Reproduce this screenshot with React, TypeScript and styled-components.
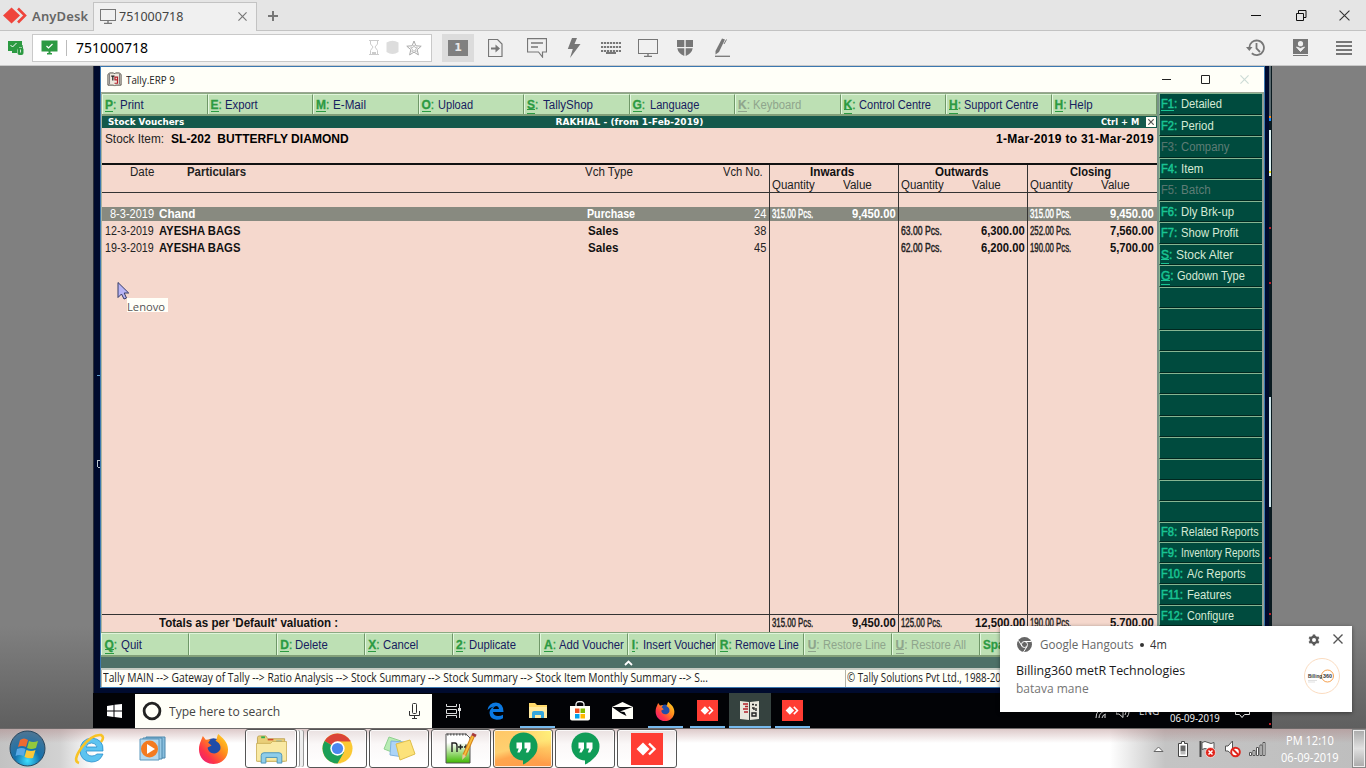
import React, { useLayoutEffect, useRef, useState } from "react";
import styled, { createGlobalStyle, css } from "styled-components";

const Global = createGlobalStyle`
  * { box-sizing: border-box; }
  html, body { margin: 0; padding: 0; overflow: hidden; }
  svg { display: block; flex: none; }
`;

const arial = `"Liberation Sans", Arial, sans-serif`;
const segoe = `"Open Sans", "Noto Sans", sans-serif`;
const tahoma = `"Noto Sans", "DejaVu Sans", sans-serif`;
const verdana = `"DejaVu Sans", Verdana, sans-serif`;

/* ---------- text that is tracked out or condensed to a given width ---------- */
const FitSpan = styled.span`
  display: inline-block;
  white-space: pre;
  transform-origin: 0 50%;
  flex: none;
`;

function Fit({ w, children }: { w: number; children: string }) {
  const ref = useRef<HTMLSpanElement>(null);
  const [style, setStyle] = useState<React.CSSProperties>({});
  useLayoutEffect(() => {
    const natural = ref.current!.offsetWidth;
    setStyle(
      natural > w
        ? { transform: `scaleX(${w / natural})`, marginRight: w - natural }
        : { letterSpacing: `${(w - natural) / children.length}px` }
    );
  }, [w, children]);
  return (
    <FitSpan ref={ref} style={style}>
      {children}
    </FitSpan>
  );
}

/* ---------- page ---------- */
const Page = styled.div`
  position: relative;
  width: 1366px;
  height: 768px;
  display: flex;
  flex-direction: column;
  overflow: hidden;
  background: #808080;
  font-family: ${arial};
`;

const TabBar = styled.div`
  height: 31px;
  flex: none;
  display: flex;
  align-items: stretch;
  background: #e5e5e5;
  border-bottom: 1px solid #c3c3c3;
  font-family: ${tahoma};
`;
const Brand = styled.div`
  width: 93px;
  padding: 1px 0 0 3px;
  display: flex;
  align-items: center;
  gap: 5px;
  font-size: 13px;
  font-weight: 600;
  color: #666;
`;
const Tab = styled.div`
  width: 164px;
  height: 30px;
  margin: 2px 0 -1px;
  padding: 0 9px 2px 6px;
  display: flex;
  align-items: center;
  gap: 3px;
  font-size: 12.5px;
  color: #444;
  background: #f0f0f0;
  border: 1px solid #c3c3c3;
  border-bottom: 0;
`;
const Push = styled.div`
  flex: 1;
`;
const PlusBox = styled.div`
  width: 32px;
  display: flex;
  align-items: center;
  justify-content: center;
  padding-top: 2px;
`;
const WinControls = styled.div`
  display: flex;
  align-items: center;
  gap: 34px;
  padding-right: 16px;
  svg:nth-child(-n + 2) {
    position: relative;
    left: 2px;
  }
`;

const ToolBar = styled.div`
  height: 35px;
  flex: none;
  display: flex;
  align-items: center;
  padding: 0 14px 1px 8px;
  background: #f0f0f0;
  border-bottom: 1px solid #c9c9c9;
`;
const Address = styled.div`
  width: 400px;
  height: 28px;
  margin-left: 6px;
  padding: 0 9px 0 8px;
  display: flex;
  align-items: center;
  background: #fff;
  border: 1px solid #c9c9c9;
  font-family: ${tahoma};
  font-size: 14px;
  color: #000;
`;
const Divider = styled.div`
  width: 1px;
  height: 16px;
  margin: 0 9px 0 8px;
  background: #bbb;
`;
const AddressIcons = styled.div`
  display: flex;
  align-items: center;
  gap: 7px;
`;
const ScreenButton = styled.div`
  width: 32px;
  height: 28px;
  margin-left: 10px;
  display: flex;
  align-items: center;
  justify-content: center;
  background: #dcdcdc;
`;
const ScreenNo = styled.div`
  width: 20px;
  height: 16px;
  background: #808080;
  color: #e8e8e8;
  font: bold 11px/16px ${verdana};
  text-align: center;
`;
const Tools = styled.div`
  display: flex;
  align-items: center;
  margin-left: 9px;
`;
const ToolSlot = styled.div<{ $w: number }>`
  width: ${(p) => p.$w}px;
  display: flex;
  justify-content: center;
`;
const RightTools = styled.div`
  display: flex;
  align-items: center;
  gap: 28px;
`;

/* ---------- remote desktop ---------- */
const Stage = styled.div`
  height: 662px;
  flex: none;
  display: flex;
  padding-left: 93px;
  background: linear-gradient(#808080 560px, #5f5f5f 662px);
`;
const Remote = styled.div`
  position: relative;
  width: 1179px;
  height: 662px;
  display: flex;
  flex-direction: column;
  background: linear-gradient(90deg, #2b2f38 0 1px, #000b2e 1px 1176px, #0a1a20 1176px);
`;
const Speck = styled.div<{ $x: number; $y: number; $w: number; $h: number; $c: string }>`
  position: absolute;
  left: ${(p) => p.$x}px;
  top: ${(p) => p.$y}px;
  width: ${(p) => p.$w}px;
  height: ${(p) => p.$h}px;
  background: ${(p) => p.$c};
`;
const TallyWindow = styled.div`
  width: 1165px;
  height: 622px;
  margin: 0 0 5px 7px;
  display: flex;
  flex-direction: column;
  border: 1px solid #3b78b0;
  background: #fffff8;
`;
const TitleBar = styled.div`
  height: 26px;
  flex: none;
  display: flex;
  align-items: center;
  gap: 4px;
  padding: 0 15px 1px 6px;
  font: 11px ${segoe};
  color: #222;
  border-bottom: 1px solid #9aa593;
`;
const TitleControls = styled.div`
  display: flex;
  align-items: center;
  gap: 30px;
`;
const Work = styled.div`
  height: 539px;
  flex: none;
  display: flex;
`;
const MainCol = styled.div`
  width: 1056px;
  display: flex;
  flex-direction: column;
  border-left: 1px solid #a9b3a0;
`;
const ButtonRow = styled.div<{ $h: number }>`
  height: ${(p) => p.$h}px;
  flex: none;
  display: flex;
  border-top: 1px solid #8ba982;
  border-bottom: 2px solid #82a079;
  background: #bde0b4;
`;
const GreenButton = styled.div<{ $w: number; $off?: boolean }>`
  width: ${(p) => p.$w}px;
  flex: none;
  display: flex;
  align-items: center;
  padding-left: 2px;
  overflow: hidden;
  white-space: nowrap;
  border-left: 1px solid #e4f8df;
  border-top: 1px solid #e0f4da;
  border-right: 1px solid #6f9768;
  background: #bde0b4;
  color: ${(p) => (p.$off ? "#8fa58c" : "#17205f")};
  font-size: 12px;
`;
const BottomRow = styled(ButtonRow)`
  ${GreenButton} {
    padding-left: 2.5px;
  }
`;
const Key = styled.span<{ $w: number; $off?: boolean; $dark?: boolean; $lines?: number }>`
  width: ${(p) => p.$w}px;
  flex: none;
  color: ${(p) => (p.$dark ? (p.$off ? "#54756e" : "#19c493") : p.$off ? "#8fa58c" : "#2c9a42")};
  -webkit-text-stroke: ${(p) => (p.$off ? 0.15 : p.$dark ? 0.5 : 0.3)}px currentColor;
  b {
    display: inline-block;
    position: relative;
    font-weight: ${(p) => (p.$dark ? 400 : 700)};
    font-size: 12px;
    line-height: 14px;
  }
  ${(p) =>
    p.$lines &&
    css`
      b::after {
        content: "";
        position: absolute;
        left: 0;
        right: 0;
        bottom: ${p.$lines === 2 ? -2 : -1}px;
        height: ${p.$lines === 2 ? 3 : 1}px;
        border-top: 1px solid currentColor;
        border-bottom: ${p.$lines === 2 ? "1px solid currentColor" : "0"};
      }
    `}
`;
const ReportBar = styled.div`
  height: 12px;
  flex: none;
  display: flex;
  align-items: center;
  justify-content: space-between;
  padding: 0 1px 0 6px;
  background: #14594b;
  color: #fff;
  font: bold 9px/11px ${verdana};
`;
const BarSide = styled.div<{ $w: number }>`
  width: ${(p) => p.$w}px;
  display: flex;
  align-items: center;
  justify-content: flex-end;
  gap: 7px;
  &:first-child {
    justify-content: flex-start;
  }
`;
const CloseMini = styled.div`
  width: 10px;
  height: 10px;
  background: #fffff8;
  padding: 2px;
`;
const ItemHeader = styled.div`
  height: 35px;
  flex: none;
  display: flex;
  justify-content: space-between;
  align-items: flex-start;
  padding: 3px 3px 0 3px;
  font-size: 12px;
  line-height: 16px;
  color: #222;
  background: #f5d8cd;
  b { color: #000; }
`;
const ItemName = styled.div`
  display: flex;
  gap: 7px;
`;
const Report = styled.div`
  height: 470px;
  flex: none;
  display: flex;
  flex-direction: column;
  border-top: 2px solid #111;
  background: #f5d8cd;
  font-size: 12px;
  color: #222;
`;
const HeadRow = styled.div`
  height: 28px;
  flex: none;
  display: grid;
  grid-template-columns: 85px 398px 129px 55px 129px 129px 129px;
  border-bottom: 1px solid #333;
  line-height: 14px;
`;
const HeadCell = styled.div<{ $pad?: number; $bold?: boolean }>`
  padding: 0 0 0 ${(p) => p.$pad || 0}px;
  font-weight: ${(p) => (p.$bold ? 700 : 400)};
`;
const GroupHead = styled.div`
  border-left: 1px solid #333;
  padding: 0 0 0 2px;
  b {
    display: block;
    text-align: center;
    padding-right: 5px;
    color: #111;
  }
`;
const SubHead = styled.div`
  display: flex;
  gap: 28px;
  line-height: 13px;
`;
const Row = styled.div<{ $sel?: boolean; $h: number }>`
  height: ${(p) => p.$h}px;
  flex: none;
  display: grid;
  grid-template-columns: 57px 428px 112px 70px 129px 129px 129px;
  line-height: ${(p) => p.$h}px;
  color: ${(p) => (p.$sel ? "#fff" : "#222")};
  background: ${(p) => (p.$sel ? "#888a80" : "transparent")};
  b { color: ${(p) => (p.$sel ? "#fff" : "#111")}; }
`;
const Cell = styled.div<{ $right?: number; $pad?: number }>`
  text-align: ${(p) => (p.$right !== undefined ? "right" : "left")};
  padding: 0 ${(p) => p.$right || 0}px 0 ${(p) => p.$pad || 0}px;
  white-space: nowrap;
`;
const Pair = styled.div`
  display: flex;
  justify-content: space-between;
  border-left: 1px solid #333;
  padding: 0 2px 0 2px;
`;
const Qty = styled.span`
  -webkit-text-stroke: 0.45px currentColor;
`;
const TotalsRow = styled(Row)`
  border-top: 1px solid #333;
  border-bottom: 1px solid #555;
  line-height: 16px;
`;
const SideCol = styled.div`
  width: 107px;
  height: 533px;
  display: flex;
  flex-direction: column;
  border-left: 2px solid #789387;
  border-right: 2px solid #91a196;
  background: #004b3e;
`;
const SideButton = styled.div<{ $h: number; $off?: boolean }>`
  height: ${(p) => p.$h}px;
  flex: none;
  display: flex;
  align-items: center;
  padding: 1px 0 0 1px;
  white-space: nowrap;
  overflow: hidden;
  border-left: 1px solid #86b592;
  border-top: 1px solid #86b592;
  border-bottom: 1px solid #00271f;
  background: #004b3e;
  color: ${(p) => (p.$off ? "#5f7d76" : "#d5ead5")};
  font-size: 12px;
`;
const Strip = styled.div`
  height: 11px;
  flex: none;
  display: flex;
  justify-content: center;
  align-items: center;
  padding-right: 109px;
  background: #4d7168;
`;
const StatusBar = styled.div`
  flex: 1;
  display: flex;
  border-top: 2px solid #c6cdc4;
  font: 12px/16px ${segoe};
  color: #222;
`;
const StatusPart = styled.div<{ $w: number }>`
  width: ${(p) => p.$w}px;
  padding-left: 1px;
  border-left: 1px solid #b5b5a8;
  white-space: nowrap;
  overflow: hidden;
`;
const Pointer = styled.div`
  position: absolute;
  left: 24px;
  top: 215px;
`;
const PointerTag = styled.div`
  position: absolute;
  left: 34px;
  top: 232px;
  width: 41px;
  height: 14px;
  background: #fffff8;
  color: #555;
  font: 11.5px/18px ${segoe};
`;

/* ---------- remote taskbar ---------- */
const RemoteTaskbar = styled.div`
  height: 35px;
  flex: none;
  display: flex;
  background: #020306;
`;
const StartCell = styled.div`
  width: 42px;
  display: flex;
  align-items: center;
  justify-content: center;
`;
const Search = styled.div`
  width: 297px;
  margin: 1px 0 0 0;
  padding: 0 12px 0 7px;
  display: flex;
  align-items: center;
  gap: 7px;
  background: #fffff8;
  color: #444;
  font: 13.5px ${segoe};
`;
const RemoteApp = styled.div<{ $open?: boolean; $active?: boolean }>`
  width: 42.4px;
  display: flex;
  align-items: center;
  justify-content: center;
  background: ${(p) => (p.$active ? "#35423f" : "transparent")};
  background-image: ${(p) => (p.$open ? "linear-gradient(#76b9ed, #76b9ed)" : "none")};
  background-repeat: no-repeat;
  background-size: ${(p) => (p.$active ? "42px" : "35px")} 2px;
  background-position: 50% 100%;
`;
const RemoteTray = styled.div`
  display: flex;
  align-items: flex-end;
  gap: 9px;
  padding: 0 21px 3px 0;
  color: #fff;
  font: 10.5px/14px ${segoe};
`;
const TrayClock = styled.div`
  margin: 0 6px 0 2px;
`;
const TrayLang = styled.div`
  padding-bottom: 7px;
`;
const TrayGlyph = styled.div<{ $b: number }>`
  padding-bottom: ${(p) => p.$b}px;
`;

/* ---------- local taskbar ---------- */
const Taskbar = styled.div`
  height: 40px;
  flex: none;
  display: flex;
  border-top: 1px solid #6e6a6a;
  background: linear-gradient(rgba(170, 120, 120, 0.4), rgba(255, 240, 240, 0) 14px),
    linear-gradient(90deg, #c2c2c2, #d2d2d2 60px, #fff 95px, #fff 1110px, #c4c4c4 1165px, #bebebe 1366px);
`;
const Pinned = styled.div`
  width: 245px;
  display: grid;
  grid-template-columns: 54px 71px 56px 64px;
  align-items: center;
  justify-items: center;
`;
const TaskButton = styled.div<{ $w: number; $hot?: boolean; $stack?: boolean }>`
  width: ${(p) => p.$w}px;
  height: 39px;
  margin-right: 2px;
  display: flex;
  align-items: center;
  justify-content: center;
  border: 1px solid #555;
  border-radius: 3px;
  box-shadow: inset 0 0 0 1px rgba(255, 255, 255, 0.8);
  background: ${(p) =>
    p.$hot
      ? "radial-gradient(circle at 100% 0, #fff27a, rgba(255, 220, 110, 0) 50%), linear-gradient(165deg, #ffc766 0%, #ffd070 45%, #ffa64e 60%, #ff9a49)"
      : "linear-gradient(#e9e0e0, #fbf8f8 14px, #ffffff)"};
  ${(p) =>
    p.$stack &&
    css`
      margin-right: 10px;
      box-shadow: inset 0 0 0 1px #fff, 3px 0 0 -1px #fff, 4px 0 0 -1px #999, 7px 0 0 -1px #eee, 8px 0 0 -1px #999;
    `}
`;
const SysTray = styled.div`
  display: flex;
  align-items: center;
  gap: 8px;
  padding-top: 1px;
`;
const Clock = styled.div`
  width: 82px;
  padding: 3px 0 0 6px;
  margin-right: 4px;
  text-align: center;
  color: #fff;
  font: 12px/17px ${segoe};
`;
const ShowDesktop = styled.div`
  width: 14px;
  border: 1px solid #888;
  box-shadow: inset 0 0 0 1px #eee;
  background: linear-gradient(#aaa, #e0e0e0 50%, #aaa);
`;

/* ---------- notification ---------- */
const Toast = styled.div`
  position: absolute;
  left: 1000px;
  top: 626px;
  width: 352px;
  height: 86px;
  padding: 10px 9px 0 16px;
  display: flex;
  justify-content: space-between;
  background: #fff;
  box-shadow: 0 1px 4px rgba(0, 0, 0, 0.45);
  font: 12.5px ${segoe};
  color: #222;
`;
const ToastText = styled.div`
  display: flex;
  flex-direction: column;
`;
const ToastHead = styled.div`
  height: 17px;
  display: flex;
  align-items: center;
  gap: 7px;
  color: #666;
  margin-bottom: 9px;
  em { font-style: normal; color: #333; }
  i { width: 4px; height: 4px; border-radius: 50%; background: #333; margin: 1px -1px 0; }
`;
const ToastLine = styled.div<{ $dim?: boolean }>`
  line-height: 18px;
  color: ${(p) => (p.$dim ? "#757575" : "#1a1a1a")};
`;
const ToastSide = styled.div`
  display: flex;
  flex-direction: column;
  align-items: flex-end;
  gap: 12px;
`;
const ToastActions = styled.div`
  display: flex;
  gap: 13px;
  margin-top: -2px;
`;
const Avatar = styled.div`
  width: 36px;
  height: 36px;
  margin-right: 3px;
  display: flex;
  align-items: center;
  justify-content: center;
  border: 1px solid #fbdcc0;
  border-radius: 50%;
`;

/* ---------- icons ---------- */
const AnyLogo = () => (
  <svg width="24" height="18" viewBox="0 0 24 18">
    <path d="M8.5 0.5L17 8.5L8.5 16.5L0 8.5Z" fill="#ef443b" />
    <path d="M15 1.5L22 8.5L15 15.5" fill="none" stroke="#ef443b" strokeWidth="2.6" />
  </svg>
);
const Screen = ({ w = 16, h = 15, c = "#777" }: { w?: number; h?: number; c?: string }) => (
  <svg width={w} height={h} viewBox={`0 0 ${w} ${h}`} fill="none" stroke={c}>
    <rect x=".5" y=".5" width={w - 1} height={h - 4} />
    <path d={`M${w / 2} ${h - 3}v2M${w / 2 - 4} ${h - 0.5}h8`} strokeWidth="1.4" />
  </svg>
);
const Cross = ({ s = 9, c = "#777", t = 1.3 }: { s?: number; c?: string; t?: number }) => (
  <svg width={s} height={s} viewBox="0 0 10 10" stroke={c} strokeWidth={t}>
    <path d="M.5.5l9 9M9.5.5l-9 9" />
  </svg>
);
const AnyTile = ({ s }: { s: number }) => (
  <svg width={s} height={s} viewBox="0 0 32 32">
    <rect width="32" height="32" fill="#ff3d33" />
    <path d="M12 9.5L18.5 16L12 22.5L5.5 16Z" fill="#fff" />
    <path d="M18 10.500L23.500 16L18 21.500" fill="none" stroke="#fff" strokeWidth="2.400" />
  </svg>
);
const Firefox = ({ s }: { s: number }) => (
  <svg width={s} height={s} viewBox="0 0 32 32">
    <defs>
      <linearGradient id="fx" x1="1" y1="0" x2="0" y2="1">
        <stop offset="0" stopColor="#ffe226" />
        <stop offset=".4" stopColor="#ff8a1c" />
        <stop offset=".7" stopColor="#ff3647" />
        <stop offset="1" stopColor="#e31587" />
      </linearGradient>
    </defs>
    <circle cx="16" cy="15.500" r="10" fill="#214ca8" />
    <path d="M3 8L5 3L8 7L13 6.500L10.500 10L14 13L10 15C10 21 19 24 23 17C24 13 22 10 18 8C20 7 19 4 21 1C25 5 31 9 31 17C31 26 24 32 16 32C7 32 1 25 1 17C1 13 2 10 3 8Z" fill="url(#fx)" />
  </svg>
);
const Hangouts = () => (
  <svg width="29" height="33" viewBox="0 0 29 33">
    <circle cx="14.500" cy="14.500" r="14" fill="#109d58" />
    <path d="M14 27v5.500C20 30 26 24 28 17Z" fill="#109d58" />
    <path d="M7.500 10.500H13V16.500L10.700 20.500H8.300L9.700 16.500H7.500ZM15.500 10.500H21.500V16.500L19.200 20.500H16.800L18.200 16.500H15.500Z" fill="#fff" />
  </svg>
);
const Folder = ({ w, h }: { w: number; h: number }) => (
  <svg width={w} height={h} viewBox="0 0 34 32">
    <path d="M2 4Q2 2 4 2H11L13 5H31V29H2Z" fill="#e9cf78" stroke="#b79a45" strokeWidth=".8" />
    <path d="M6 3.500h4" stroke="#2fae4e" strokeWidth="2" />
    <path d="M13 6h6" stroke="#d34a2a" strokeWidth="1.600" />
    <path d="M22 8h6" stroke="#2b8fd8" strokeWidth="1.600" />
    <path d="M1 10H16L18 8H33V29H1Z" fill="#f9e9a3" stroke="#c5a94f" strokeWidth=".8" />
    <path d="M6 31V23Q6 20 9 20H25Q28 20 28 23V31H23V25H11V31Z" fill="#8fcdea" stroke="#4a93ba" />
  </svg>
);
const Book = ({ s }: { s: number }) => (
  <svg width={s} height={s} viewBox="0 0 16 16">
    <path d="M1 2.500L3 1H7L8 2L9 1H13L15 2.500V14H9L8 15L7 14H1Z" fill="#efeadf" stroke="#4a453e" />
    <path d="M2.700 2v11M13.300 2v11" stroke="#777" />
    <path d="M4.500 4.500H8M6.200 4.500V9" stroke="#222" strokeWidth="1.300" />
    <path d="M11.200 8.500V5.500H8.500V8.500H11.200V12H8" stroke="#b3202a" strokeWidth="1.300" fill="none" />
  </svg>
);
const Chrome = () => (
  <svg width="31" height="31" viewBox="0 0 32 32">
    <circle cx="16" cy="16" r="15.500" fill="#fbc934" />
    <path d="M16 16L2.600 8.250A15.500 15.500 0 0 1 29.400 8.250H16Z" fill="#db4437" />
    <path d="M2.600 8.250A15.500 15.500 0 0 0 16 31.500L22.700 19.900L16 16Z" fill="#1c9f58" />
    <path d="M16 8.250H29.400" stroke="#db4437" />
    <circle cx="16" cy="16" r="7.400" fill="#fff" />
    <circle cx="16" cy="16" r="5.800" fill="#4b87ee" />
  </svg>
);

/* ---------- data ---------- */
type Item = { k?: string; kw?: number; t?: string; w?: number; off?: boolean; lines?: number };

const topMenu: Item[] = [
  { k: "P", kw: 15, t: "Print", w: 24, lines: 1 },
  { k: "E", kw: 14, t: "Export", w: 33, lines: 1 },
  { k: "M", kw: 17, t: "E-Mail", w: 33, lines: 1 },
  { k: "O", kw: 16, t: "Upload", w: 35, lines: 1 },
  { k: "S", kw: 16, t: "TallyShop", w: 50, lines: 2 },
  { k: "G", kw: 17, t: "Language", w: 49, lines: 1 },
  { k: "K", kw: 15, t: "Keyboard", w: 48, lines: 1, off: true },
  { k: "K", kw: 15, t: "Control Centre", w: 72, lines: 2 },
  { k: "H", kw: 15, t: "Support Centre", w: 74, lines: 2 },
  { k: "H", kw: 14, t: "Help", w: 24, lines: 1 },
];
const bottomMenu: Item[] = [
  { k: "Q", kw: 16, t: "Quit", w: 21, lines: 2 },
  {},
  { k: "D", kw: 15, t: "Delete", w: 33, lines: 1 },
  { k: "X", kw: 15, t: "Cancel", w: 35, lines: 1 },
  { k: "2", kw: 13, t: "Duplicate", w: 47, lines: 1 },
  { k: "A", kw: 15, t: "Add Voucher", w: 65, lines: 1 },
  { k: "I", kw: 11, t: "Insert Voucher", w: 72, lines: 1 },
  { k: "R", kw: 15, t: "Remove Line", w: 64, lines: 1 },
  { k: "U", kw: 15, t: "Restore Line", w: 63, lines: 1, off: true },
  { k: "U", kw: 15, t: "Restore All", w: 55, lines: 2, off: true },
  { k: "Space", kw: 40 },
  {},
];
const side: Item[] = [
  { k: "F1", kw: 20, t: "Detailed", w: 41, lines: 1 },
  { k: "F2", kw: 20, t: "Period", w: 33 },
  { k: "F3", kw: 20, t: "Company", w: 48, off: true },
  { k: "F4", kw: 20, t: "Item", w: 22 },
  { k: "F5", kw: 20, t: "Batch", w: 30, off: true },
  { k: "F6", kw: 20, t: "Dly Brk-up", w: 53 },
  { k: "F7", kw: 20, t: "Show Profit", w: 57 },
  { k: "S", kw: 15, t: "Stock Alter", w: 57, lines: 2 },
  { k: "G", kw: 16, t: "Godown Type", w: 68, lines: 2 },
  ...Array.from({ length: 11 }, () => ({})),
  { k: "F8", kw: 20, t: "Related Reports", w: 78 },
  { k: "F9", kw: 20, t: "Inventory Reports", w: 79 },
  { k: "F10", kw: 26, t: "A/c Reports", w: 59 },
  { k: "F11", kw: 26, t: "Features", w: 44 },
  { k: "F12", kw: 26, t: "Configure", w: 47 },
];

type Amount = [string, string] | null;
type Voucher = { date: string; dw: number; name: string; nw: number; type: string; tw: number; no: string; cells: Amount[] };
const vouchers: Voucher[] = [
  { date: "8-3-2019", dw: 44, name: "Chand", nw: 36, type: "Purchase", tw: 48, no: "24", cells: [["315.00 Pcs.", "9,450.00"], null, ["315.00 Pcs.", "9,450.00"]] },
  { date: "12-3-2019", dw: 49, name: "AYESHA BAGS", nw: 81, type: "Sales", tw: 30, no: "38", cells: [null, ["63.00 Pcs.", "6,300.00"], ["252.00 Pcs.", "7,560.00"]] },
  { date: "19-3-2019", dw: 49, name: "AYESHA BAGS", nw: 81, type: "Sales", tw: 30, no: "45", cells: [null, ["62.00 Pcs.", "6,200.00"], ["190.00 Pcs.", "5,700.00"]] },
];

const Label = ({ i, dark }: { i: Item; dark?: boolean }) =>
  i.k ? (
    <>
      <Key $w={i.kw!} $off={i.off} $dark={dark} $lines={i.lines}>
        {i.k.length > 1 ? <b><Fit w={i.k === "Space" ? 34 : i.k.length === 3 ? 19 : 13}>{i.k}</Fit></b> : <b>{i.k}</b>}:
      </Key>
      {i.t ? <Fit w={i.w!}>{i.t}</Fit> : null}
    </>
  ) : null;

const AmountPair = ({ v }: { v: Amount }) => (
  <Pair>
    {v && (
      <>
        <Qty><Fit w={41}>{v[0]}</Fit></Qty>
        <b><Fit w={v[1].length > 8 ? 50 : 44}>{v[1]}</Fit></b>
      </>
    )}
  </Pair>
);

const Spacer = ({ h }: { h: number }) => (
  <Row $h={h}>
    <Cell /><Cell /><Cell /><Cell />
    <Pair /><Pair /><Pair />
  </Row>
);

export default function App() {
  return (
    <Page>
      <Global />
      <TabBar>
        <Brand>
          <AnyLogo />
          <Fit w={56}>AnyDesk</Fit>
        </Brand>
        <Tab>
          <Screen />
          <Fit w={64}>751000718</Fit>
          <Push />
          <Cross />
        </Tab>
        <PlusBox>
          <svg width="10" height="10" stroke="#777" strokeWidth="2"><path d="M5 0v10M0 5h10" /></svg>
        </PlusBox>
        <Push />
        <WinControls>
          <svg width="11" height="11" stroke="#111"><path d="M0 5.500h10" /></svg>
          <svg width="11" height="11" stroke="#111" fill="none"><path d="M.5 3.500h7v7h-7zM2.500 3.500v-3h7.500v7h-2.500" /></svg>
          <Cross s={11} c="#333" t={1} />
        </WinControls>
      </TabBar>

      <ToolBar>
        <svg width="18" height="16" viewBox="0 0 18 16">
          <path d="M0 1h14v6h-3l-2 3v3H4v-2H0z" fill="#2c9a42" />
          <path d="M2.500 5l2 2 4-4" stroke="#fff" fill="none" />
          <rect x="9.500" y="7.500" width="6" height="7.500" rx="2" fill="#2c9a42" />
          <path d="M10.500 8V6.500a2 2 0 0 1 4 0V8" stroke="#2c9a42" fill="none" />
          <path d="M12.500 9.500v3" stroke="#cfe8d4" />
        </svg>
        <Address>
          <svg width="17" height="15" viewBox="0 0 17 15">
            <path d="M.5.5h16v11h-16zM6 13h5v1.500H6zM7.500 11h2v3h-2z" fill="#2c9a42" />
            <path d="M5.500 6l2 2 4-4" stroke="#fff" strokeWidth="1.200" fill="none" />
          </svg>
          <Divider />
          <Fit w={72}>751000718</Fit>
          <Push />
          <AddressIcons>
            <svg width="10" height="15" fill="none" stroke="#ccc"><path d="M0 .5h10M0 14.500h10M1.500 1v3l2.500 3-2.500 3.500v3.500M8.500 1v3l-2.500 3 2.500 3.500v3.500" /><path d="M3 13h4" strokeWidth="2" /></svg>
            <svg width="13" height="15" fill="#ddd"><path d="M.5 2.500Q6.500-1 12.500 2.500V12Q6.500 16 .5 12z" /></svg>
            <svg width="16" height="16" fill="none" stroke="#aaa" strokeWidth="1"><path d="M8 1l1.900 4.800 5.300.4-4 3.500 1.200 5.200L8 12.100l-4.400 2.800 1.200-5.200-4-3.500 5.300-.4z" /><path d="M8 5l1 2.500 2.500.3-2 1.600.7 2.400L8 10.500l-2.200 1.300.7-2.400-2-1.600 2.500-.3z" strokeWidth=".7" /></svg>
          </AddressIcons>
        </Address>
        <ScreenButton><ScreenNo>1</ScreenNo></ScreenButton>
        <Tools>
          <ToolSlot $w={24}>
            <svg width="15" height="18" fill="none" stroke="#777"><path d="M.5.500h9l4.500 4.500v12.500h-13.500z" strokeWidth="1.200" /><path d="M3 9.500h5" strokeWidth="2" /><path d="M7.500 5.500v8l4.500-4z" fill="#777" stroke="none" /></svg>
          </ToolSlot>
          <ToolSlot $w={60}>
            <svg width="20" height="20" fill="none" stroke="#777"><path d="M.5.700h19v13.300h-4v5l-4-5h-11z" strokeWidth="1.200" /><path d="M4 5h12M4 9h7" strokeWidth="1.400" /></svg>
          </ToolSlot>
          <ToolSlot $w={14}>
            <svg width="14" height="20" fill="#777"><path d="M5 0h5l-2.500 6h6L3 20l2.800-9H.8z" /></svg>
          </ToolSlot>
          <ToolSlot $w={60}>
            <svg width="20" height="12" stroke="#777" strokeWidth="2"><path d="M0 1h20M0 5h20M0 9h20" strokeDasharray="2.200 .8" /><path d="M5 11h10" /></svg>
          </ToolSlot>
          <ToolSlot $w={14}><Screen w={20} h={18} /></ToolSlot>
          <ToolSlot $w={60}>
            <svg width="16" height="16" fill="#777"><path d="M0 0h7.300v7H0zM8.700 0H16v7H8.700zM.300 8.200h7V16Q1 13 .300 8.200zM8.700 8.200h7Q15 13 8.700 16z" /></svg>
          </ToolSlot>
          <ToolSlot $w={15}>
            <svg width="17" height="19"><path d="M8 .5l3 1L5 14 1.500 16.500V13z" fill="#777" /><path d="M10 6l2.500-4.500" stroke="#777" /><path d="M1 18.300h15" stroke="#777" strokeWidth="1.300" /></svg>
          </ToolSlot>
        </Tools>
        <Push />
        <RightTools>
          <svg width="19" height="18" fill="none" stroke="#777" strokeWidth="1.800"><path d="M3.300 9a7.300 7.300 0 1 1 2.500 5.300M10.500 4v5.500l3.500 3.500" /><path d="M0 8h6.500L3.300 12z" fill="#777" stroke="none" /></svg>
          <svg width="15" height="17"><path d="M0 0h15v15H0zM0 16h15v1H0z" fill="#777" /><circle cx="7.500" cy="4.700" r="2.600" fill="#f0f0f0" /><path d="M3.500 8l4 4.500 4-4.500-4 1.500z" fill="#f0f0f0" stroke="#f0f0f0" /></svg>
          <svg width="16" height="14" stroke="#777" strokeWidth="2"><path d="M0 1h16M0 5h16M0 9h16M0 13h16" /></svg>
        </RightTools>
      </ToolBar>

      <Stage>
        <Remote>
          <TallyWindow>
            <TitleBar>
              <Book s={15} />
              <Fit w={49}>Tally.ERP 9</Fit>
              <Push />
              <TitleControls>
                <svg width="9" height="9" stroke="#222"><path d="M0 4.500h9" /></svg>
                <svg width="9" height="9" stroke="#222" fill="none"><path d="M.5.5h8v8h-8z" /></svg>
                <Cross s={9} c="#cddcd6" />
              </TitleControls>
            </TitleBar>
            <Work>
              <MainCol>
                <ButtonRow $h={23}>
                  {topMenu.map((i, n) => (
                    <GreenButton key={n} $w={105.500} $off={i.off}><Label i={i} /></GreenButton>
                  ))}
                </ButtonRow>
                <ReportBar>
                  <BarSide $w={296}><Fit w={76}>Stock Vouchers</Fit></BarSide>
                  <Fit w={148}>RAKHIAL - (from 1-Feb-2019)</Fit>
                  <BarSide $w={301}>
                    <Fit w={38}>Ctrl + M</Fit>
                    <CloseMini><Cross s={6} c="#555" t={2} /></CloseMini>
                  </BarSide>
                </ReportBar>
                <ItemHeader>
                  <ItemName>
                    <Fit w={59}>Stock Item:</Fit>
                    <b><Fit w={178}>SL-202  BUTTERFLY DIAMOND</Fit></b>
                  </ItemName>
                  <b><Fit w={158}>1-Mar-2019 to 31-Mar-2019</Fit></b>
                </ItemHeader>
                <Report>
                  <HeadRow>
                    <HeadCell $pad={28}><Fit w={24}>Date</Fit></HeadCell>
                    <HeadCell $bold><Fit w={59}>Particulars</Fit></HeadCell>
                    <HeadCell><Fit w={48}>Vch Type</Fit></HeadCell>
                    <HeadCell $pad={9}><Fit w={40}>Vch No.</Fit></HeadCell>
                    {[["Inwards", 44], ["Outwards", 53], ["Closing", 41]].map(([name, w]) => (
                      <GroupHead key={name}>
                        <b><Fit w={w as number}>{name as string}</Fit></b>
                        <SubHead><Fit w={43}>Quantity</Fit><Fit w={29}>Value</Fit></SubHead>
                      </GroupHead>
                    ))}
                  </HeadRow>
                  <Spacer h={14} />
                  {vouchers.map((v, n) => (
                    <React.Fragment key={n}>
                      <Row $h={n ? 17 : 14} $sel={n === 0}>
                        <Cell $right={5}><Fit w={v.dw}>{v.date}</Fit></Cell>
                        <Cell><b><Fit w={v.nw}>{v.name}</Fit></b></Cell>
                        <Cell $pad={n ? 1 : 0}><b><Fit w={v.tw}>{v.type}</Fit></b></Cell>
                        <Cell $right={3}><Fit w={12}>{v.no}</Fit></Cell>
                        {v.cells.map((c, m) => <AmountPair key={m} v={c} />)}
                      </Row>
                      {n === 0 && <Spacer h={2} />}
                    </React.Fragment>
                  ))}
                  <Spacer h={357} />
                  <TotalsRow $h={19}>
                    <Cell />
                    <Cell><b><Fit w={179}>Totals as per 'Default' valuation :</Fit></b></Cell>
                    <Cell /><Cell />
                    <AmountPair v={["315.00 Pcs.", "9,450.00"]} />
                    <AmountPair v={["125.00 Pcs.", "12,500.00"]} />
                    <AmountPair v={["190.00 Pcs.", "5,700.00"]} />
                  </TotalsRow>
                </Report>
              </MainCol>
              <SideCol>
                {side.map((i, n) => (
                  <SideButton key={n} $h={n < 18 ? 21.500 : 20.800} $off={i.off}><Label i={i} dark /></SideButton>
                ))}
              </SideCol>
            </Work>
            <BottomRow $h={25}>
              {bottomMenu.map((i, n) => (
                <GreenButton key={n} $w={87.900} $off={i.off}><Label i={i} /></GreenButton>
              ))}
            </BottomRow>
            <Strip>
              <svg width="9" height="6" fill="none" stroke="#fff" strokeWidth="1.800"><path d="M1 5l3.500-3.500L8 5" /></svg>
            </Strip>
            <StatusBar>
              <StatusPart $w={744}><Fit w={605}>{"Tally MAIN --> Gateway of Tally --> Ratio Analysis --> Stock Summary --> Stock Summary --> Stock Item Monthly Summary --> S..."}</Fit></StatusPart>
              <StatusPart $w={400}><Fit w={165}>© Tally Solutions Pvt Ltd., 1988-2018</Fit></StatusPart>
            </StatusBar>
          </TallyWindow>
          <RemoteTaskbar>
            <StartCell>
              <svg width="15" height="14" fill="#fff"><path d="M0 2l6.500-1v5.500H0zM7.500.8L15 0v6.500H7.500zM0 7.500h6.500V13L0 12zM7.500 7.500H15V14l-7.500-1z" /></svg>
            </StartCell>
            <Search>
              <svg width="20" height="20" fill="none" stroke="#222" strokeWidth="2.800"><circle cx="10" cy="10" r="7.900" /></svg>
              <Fit w={111}>Type here to search</Fit>
              <Push />
              <svg width="11" height="16" fill="none" stroke="#333"><rect x="3.500" y=".5" width="4" height="10" rx="1" /><path d="M.5 8v4.500h10V8M5.500 12.500v3M3 15.500h5" /></svg>
            </Search>
            <RemoteApp>
              <svg width="15" height="14" fill="none" stroke="#ddd"><path d="M.5 0v2.500h10V0M.5 5.500h10v4H.5zM.5 14v-2.500h10V14M13.500 0v14" /><path d="M13.500 4v3" strokeWidth="3" /></svg>
            </RemoteApp>
            <RemoteApp>
              <svg width="17" height="18" viewBox="0 0 17 18"><path d="M.5 8Q2 .5 9 .5Q16.500 1 16.500 10H6Q6.500 14 11 14Q14 14 16 12.800V16.300Q13 18 9.500 17.800Q3 17 2.500 11Q2.500 6.500 7 4.500Q3 5 .5 8ZM6 7H12Q11.500 4 9 4Q6.500 4.500 6 7Z" fill="#0a78e0" /></svg>
            </RemoteApp>
            <RemoteApp $open>
              <svg width="20" height="17"><path d="M1 1h6l2 2h10v13H1z" fill="#ffd96b" /><path d="M1 5h18v11H1z" fill="#ffe9a0" /><path d="M4 16v-5q0-2 2-2h8q2 0 2 2v5h-3v-3H7v3z" fill="#35a6dc" /></svg>
            </RemoteApp>
            <RemoteApp>
              <svg width="20" height="20"><path d="M6 6V3.500q0-3 4-3t4 3V6" fill="none" stroke="#eee" strokeWidth="1.300" /><path d="M0 5h20v12.500q0 2-2 2H2q-2 0-2-2z" fill="#fffff8" /><path d="M5 7.500h4.500v4.500H5z" fill="#f25022" /><path d="M10.500 7.500H15v4.500h-4.500z" fill="#7fba00" /><path d="M5 13h4.500v4.500H5z" fill="#00a4ef" /><path d="M10.500 13H15v4.500h-4.500z" fill="#ffb900" /></svg>
            </RemoteApp>
            <RemoteApp>
              <svg width="21" height="17"><path d="M0 5L10.500 0L21 5v12H0z" fill="#fffff8" /><path d="M0 5h20.500L8 9.500l4.500.5L14.500 14 8.500 11z" fill="#020306" /></svg>
            </RemoteApp>
            <RemoteApp $open><Firefox s={20} /></RemoteApp>
            <RemoteApp $open><AnyTile s={21} /></RemoteApp>
            <RemoteApp $open $active>
              <svg width="20" height="21"><path d="M0 1l9 1v18l-9-1zM10 2l9-1v18l-9 1z" fill="#e8e6dc" /><path d="M3 4h5M5 6.500h3M3 9h5M4 12h4" stroke="#b3202a" strokeWidth="1.300" /><path d="M12 4.500h2M16 4v2M12 8h2v2M16 8v3M12 13h4v3h-4z" stroke="#222" strokeWidth="1.400" fill="none" /></svg>
            </RemoteApp>
            <RemoteApp $open><AnyTile s={21} /></RemoteApp>
            <Push />
            <RemoteTray>
              <TrayGlyph $b={12}><svg width="12" height="7" fill="none" stroke="#fff"><path d="M1 6l5-5 5 5" /></svg></TrayGlyph>
              <TrayGlyph $b={7}><svg width="12" height="12" fill="none" stroke="#ddd"><path d="M1 12q0-9 10-11M4 12q0-6 7-7M7 12q1-4 4-4M10 9v3" /></svg></TrayGlyph>
              <TrayGlyph $b={7}><svg width="14" height="12" fill="none" stroke="#ddd"><path d="M0 4h3l4-3.500v11L3 8H0zM9 3q2 3 0 6M11 1q4 5 0 10" /></svg></TrayGlyph>
              <TrayLang><Fit w={20}>ENG</Fit></TrayLang>
              <TrayClock><Fit w={50}>06-09-2019</Fit></TrayClock>
              <TrayGlyph $b={7}><svg width="16" height="14" fill="none" stroke="#fff"><path d="M.5.500h14v10h-5l-2.500 3-2.500-3h-4z" /></svg></TrayGlyph>
            </RemoteTray>
          </RemoteTaskbar>
          <Pointer>
            <svg width="13" height="20"><path d="M1 1.500v15l3.500-3.500 2.500 5 2.500-1-2.300-5h4.500z" fill="#b8b4f5" stroke="#333a66" /></svg>
          </Pointer>
          <PointerTag><Fit w={38}>Lenovo</Fit></PointerTag>
          <Speck $x={4} $y={309} $w={3} $h={1} $c="#5f9fd0" />
          <Speck $x={4} $y={394} $w={1} $h={7} $c="#b9c4cc" />
          <Speck $x={5} $y={394} $w={2} $h={1} $c="#b9c4cc" />
          <Speck $x={5} $y={401} $w={2} $h={1} $c="#b9c4cc" />
          <Speck $x={1176} $y={0} $w={2} $h={50} $c="#5b6b70" />
          <Speck $x={1176} $y={50} $w={2} $h={2} $c="#ff8a1c" />
          <Speck $x={1176} $y={52} $w={2} $h={3} $c="#1e90ff" />
          <Speck $x={1176} $y={64} $w={2} $h={46} $c="#dff4f4" />
          <Speck $x={1176} $y={105} $w={2} $h={2} $c="#f0e020" />
          <Speck $x={1176} $y={161} $w={2} $h={2} $c="#c0202a" />
          <Speck $x={1176} $y={216} $w={2} $h={2} $c="#c0202a" />
          <Speck $x={1176} $y={331} $w={2} $h={110} $c="#cfe6ea" />
          <Speck $x={1176} $y={491} $w={2} $h={2} $c="#c0202a" />
          <Speck $x={1176} $y={547} $w={2} $h={2} $c="#c0202a" />
          <Speck $x={1176} $y={657} $w={2} $h={2} $c="#c0202a" />
        </Remote>
      </Stage>

      <Taskbar>
        <Pinned>
          <svg width="37" height="37" viewBox="0 0 37 37">
            <defs>
              <radialGradient id="orb" cx=".5" cy=".85" r=".8">
                <stop offset="0" stopColor="#3fe0ff" />
                <stop offset=".45" stopColor="#1471ad" />
                <stop offset="1" stopColor="#4b7594" />
              </radialGradient>
            </defs>
            <circle cx="18.500" cy="18.500" r="17.500" fill="url(#orb)" stroke="#27465e" />
            <path d="M11 10Q15 7 19 10L17 17Q13 15 9 17Z" fill="#ee6a31" />
            <path d="M20 11Q24 13 29 11L27 18Q22 20 18 18Z" fill="#93c83d" />
            <path d="M8 19Q13 17 16.500 19L14.500 26Q10 24 6.500 26Z" fill="#5aa9e6" />
            <path d="M17.500 20Q22 22 26.500 20L24 28Q20 29 15.500 27Z" fill="#fbc83a" />
          </svg>
          <svg width="32" height="32" viewBox="0 0 32 32">
            <path d="M29 18H12Q13 23 18 23Q21 23 23 21H29Q26 29 17.500 29Q6 28 6 17Q7 6 17.500 5Q30 6 29 18ZM12 14H23Q22 10 17.500 10Q13 10 12 14Z" fill="#5cc3f0" stroke="#2a8fcb" strokeWidth=".8" />
            <path d="M5 30Q-2 28 8 14Q18 1 27 2Q31 4 27 9" fill="none" stroke="#f8c326" strokeWidth="2.600" />
          </svg>
          <svg width="28" height="26" viewBox="0 0 28 26">
            <path d="M7 1h19v21H7z" fill="#88bede" stroke="#4c88ad" /><path d="M4 2h19v21H4z" fill="#9ccbe6" stroke="#4c88ad" /><path d="M1 3h19v21H1z" fill="#b5d9ee" stroke="#5c98bd" />
            <circle cx="10.500" cy="13" r="8.500" fill="#f47b20" /><path d="M8 8l8 5-8 5z" fill="#fff" />
          </svg>
          <Firefox s={31} />
        </Pinned>
        <TaskButton $w={52} $stack><Folder w={33} h={30} /></TaskButton>
        <TaskButton $w={60}><Chrome /></TaskButton>
        <TaskButton $w={60}>
          <svg width="33" height="27" viewBox="0 0 33 27">
            <path d="M6 2L18 6L14 19L1 14Z" fill="#b8ecb4" stroke="#8fd08f" /><path d="M8 6L21 7L20 22L7 20Z" fill="#acd4f8" stroke="#7fb2e0" /><path d="M13 9L27 5L32 19L17 25Z" fill="#fce27a" stroke="#dfbe4a" />
          </svg>
        </TaskButton>
        <TaskButton $w={60}>
          <svg width="32" height="33" viewBox="0 0 32 33">
            <defs><linearGradient id="np" x1="0" y1="0" x2="0" y2="1"><stop offset=".3" stopColor="#fff" /><stop offset="1" stopColor="#3fb800" /></linearGradient></defs>
            <path d="M1 2h20l4 4v25H1z" fill="url(#np)" stroke="#555" /><path d="M2 2.500h20" stroke="#666" strokeDasharray="1.500 1.500" strokeWidth="2" />
            <path d="M7 20v-9h3q2 0 2 3v6M13 15h5M15.500 12.500v5M19 15h4M21 12.500v5" stroke="#222" strokeWidth="1.400" fill="none" />
            <path d="M28 4L19 24" stroke="#d8871c" strokeWidth="4" /><path d="M28 4L19 24" stroke="#f8c040" strokeWidth="1.800" /><path d="M17.500 22l3.500 2-3.800 4z" fill="#e8c89a" /><path d="M27 2l4 2" stroke="#a63a3a" strokeWidth="3" />
          </svg>
        </TaskButton>
        <TaskButton $w={60} $hot><Hangouts /></TaskButton>
        <TaskButton $w={60}><Hangouts /></TaskButton>
        <TaskButton $w={60}><AnyTile s={32} /></TaskButton>
        <Push />
        <SysTray>
          <svg width="11" height="6"><path d="M1 5.500l4.500-4.500L10 5.500z" fill="#fff" stroke="#666" /></svg>
          <svg width="19" height="18"><g transform="translate(5)"><path d="M4.500 1.500h3v2h3v13h-9v-13h3z" fill="#fff" stroke="#444" /><path d="M3.500 5.500h5v6h-5z" fill="#666" /><path d="M3.500 11.500h5v3h-5z" fill="#bbb" /></g></svg>
          <svg width="17" height="18"><path d="M1.500 1v16" stroke="#444" strokeWidth="2" /><path d="M3 2.500q3-2 6 0t6 0v7q-3 2-6 0t-6 0z" fill="#fff" stroke="#555" /><circle cx="11.500" cy="12.500" r="5" fill="#e0241b" stroke="#fff" strokeWidth=".6" /><path d="M9.500 10.500l4 4M13.500 10.500l-4 4" stroke="#fff" strokeWidth="1.500" /></svg>
          <svg width="17" height="18"><path d="M1.500 6h2.500l4.500-5v14l-4.500-4h-2.500z" fill="#fff" stroke="#555" /><circle cx="11.500" cy="12" r="4.300" fill="#fff" stroke="#e0241b" strokeWidth="2" /><path d="M8.500 9l6 6" stroke="#e0241b" strokeWidth="2" /></svg>
          <svg width="17" height="14" fill="#fff" stroke="#555"><path d="M.5 10.500h2v3h-2zM4 8.500h2v5H4zM7.500 5.500h2v8h-2zM11 3h2v10.500h-2zM14 .5h2v13h-2z" /></svg>
        </SysTray>
        <Clock>
          <Fit w={48}>PM 12:10</Fit>
          <br />
          <Fit w={58}>06-09-2019</Fit>
        </Clock>
        <ShowDesktop />
      </Taskbar>

      <Toast>
        <ToastText>
          <ToastHead>
            <svg width="17" height="17" viewBox="0 0 17 17"><circle cx="8.500" cy="8.500" r="7.500" fill="#666" /><circle cx="8.500" cy="8.500" r="3" fill="none" stroke="#fff" /><path d="M8.500 5.500h7M6 10.300L2.500 4.500M11 10.500L7.500 16" stroke="#fff" /></svg>
            <Fit w={94}>Google Hangouts</Fit>
            <i />
            <em><Fit w={17}>4m</Fit></em>
          </ToastHead>
          <ToastLine><Fit w={169}>Billing360 metR Technologies</Fit></ToastLine>
          <ToastLine $dim><Fit w={73}>batava mane</Fit></ToastLine>
        </ToastText>
        <ToastSide>
          <ToastActions>
            <svg width="12" height="12" viewBox="0 0 12 12"><circle cx="6" cy="6" r="3.200" fill="none" stroke="#5a5a5a" strokeWidth="2.400" /><path d="M6 .5v2M6 9.500v2M1.200 3.200l1.600 1M9.200 7.800l1.600 1M1.200 8.800l1.600-1M9.200 4.200l1.600-1" stroke="#5a5a5a" strokeWidth="2.400" /></svg>
            <Cross s={10} c="#555" t={1.400} />
          </ToastActions>
          <Avatar>
            <svg width="30" height="16" viewBox="0 0 30 16" fontFamily="Liberation Sans" fontWeight="bold">
              <circle cx="20.500" cy="8" r="6" fill="none" stroke="#f6a04d" />
              <text x="1" y="9.500" fontSize="5" fill="#333" textLength="14" lengthAdjust="spacingAndGlyphs">Billing</text>
              <text x="16" y="10" fontSize="5.500" fill="#333" textLength="9" lengthAdjust="spacingAndGlyphs">360</text>
              <path d="M1 12.500h9M1 14h7" stroke="#ccc" strokeWidth=".6" />
            </svg>
          </Avatar>
        </ToastSide>
      </Toast>
    </Page>
  );
}
